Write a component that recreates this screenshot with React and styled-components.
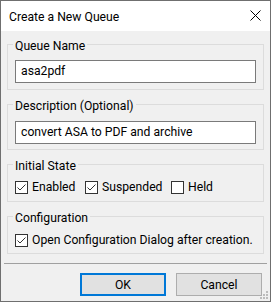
import React from "react";
import styled, { createGlobalStyle } from "styled-components";

const Global = createGlobalStyle`
  html, body { margin: 0; padding: 0; background: #ffffff; }
  * { box-sizing: border-box; }
  body { font-family: Roboto, "Segoe UI", sans-serif; }
`;

const Window = styled.div`
  position: relative;
  width: 271px;
  height: 302px;
  border: 1px solid #6f6f6f;
  background: #f0f0f0;
  display: flex;
  flex-direction: column;
  font-family: Roboto, sans-serif;
  font-size: 12.2px;
  color: #000;
`;

const TitleBar = styled.div`
  height: 30px;
  background: #ffffff;
  display: flex;
  align-items: center;
  justify-content: space-between;
  padding: 0 9px 0 8px;
  flex-shrink: 0;
`;

const Title = styled.span`
  font-size: 12.2px;
  line-height: 16px;
  padding-top: 1px;
`;

const CloseIcon = styled.svg`
  display: block;
  width: 11px;
  height: 11px;
  align-self: flex-start;
  margin-top: 9px;
`;

const Body = styled.div`
  flex: 1;
  display: flex;
  flex-direction: column;
  padding: 3px 6px 0 6px;
`;

const Group = styled.fieldset`
  margin: 0 0 4px 0;
  border: 1px solid #dcdcdc;
  padding: ${(p) => p.$pad || "6px 7px 6px 7px"};
  min-width: 0;
  &:last-of-type {
    margin-bottom: 0;
  }
`;

const Legend = styled.legend`
  font-size: 12.2px;
  line-height: 16px;
  padding: 4px 2px 0 2px;
  margin-left: -2px;
`;

const TextBox = styled.div`
  height: 23px;
  border: 1px solid #7a7a7a;
  background: #ffffff;
  font-size: 12.2px;
  line-height: 20px;
  padding: 0 5px;
  white-space: nowrap;
  overflow: hidden;
`;

const CheckRow = styled.div`
  display: flex;
  align-items: center;
  height: 13px;
`;

const CheckLabel = styled.label`
  display: flex;
  align-items: center;
  gap: 4px;
  width: ${(p) => (p.$w ? `${p.$w}px` : "auto")};
  flex-shrink: 0;
  font-size: 12.2px;
  line-height: 13px;
  white-space: nowrap;
`;

const Box = styled.span`
  width: 13px;
  height: 13px;
  border: 1px solid #333333;
  background: #ffffff;
  display: flex;
  align-items: center;
  justify-content: center;
  flex-shrink: 0;
`;

const Separator = styled.div`
  height: 1px;
  background: #a0a0a0;
  margin: 9px -3px 0 -3px;
`;

const ButtonRow = styled.div`
  display: flex;
  justify-content: flex-end;
  gap: 10px;
  padding: 9px 2px 0 0;
`;

const Button = styled.button`
  width: 86px;
  height: 23px;
  margin: 0;
  padding: 0;
  font-family: Roboto, sans-serif;
  font-size: 12.2px;
  color: #000;
  background: #e1e1e1;
  border: ${(p) => (p.$primary ? "2px solid #0078d7" : "1px solid #adadad")};
`;

const Grip = styled.svg`
  position: absolute;
  right: 1px;
  bottom: 1px;
  width: 10px;
  height: 10px;
`;

function Check({ checked, w, children }) {
  return (
    <CheckLabel $w={w}>
      <Box>
        {checked && (
          <svg width="11" height="11" viewBox="0 0 11 11">
            <polyline points="1.5,5.5 4,8 9.5,2.5" fill="none" stroke="#333" strokeWidth="1" />
          </svg>
        )}
      </Box>
      {children}
    </CheckLabel>
  );
}

export default function App() {
  return (
    <>
      <Global />
      <Window>
        <TitleBar>
          <Title>Create a New Queue</Title>
          <CloseIcon viewBox="0 0 11 11">
            <path d="M0.5 0.5 L10.5 10.5 M10.5 0.5 L0.5 10.5" stroke="#000" strokeWidth="1" />
          </CloseIcon>
        </TitleBar>
        <Body>
          <Group $pad="6px 7px 6px 7px">
            <Legend>Queue Name</Legend>
            <TextBox>asa2pdf</TextBox>
          </Group>
          <Group $pad="7px 7px 5px 7px">
            <Legend>Description (Optional)</Legend>
            <TextBox>convert ASA to PDF and archive</TextBox>
          </Group>
          <Group $pad="7px 7px 7px 7px">
            <Legend>Initial State</Legend>
            <CheckRow>
              <Check checked w={70}>Enabled</Check>
              <Check checked w={86}>Suspended</Check>
              <Check>Held</Check>
            </CheckRow>
          </Group>
          <Group $pad="8px 7px 6px 7px">
            <Legend>Configuration</Legend>
            <CheckRow>
              <Check checked>Open Configuration Dialog after creation.</Check>
            </CheckRow>
          </Group>
          <Separator />
          <ButtonRow>
            <Button $primary>OK</Button>
            <Button>Cancel</Button>
          </ButtonRow>
        </Body>
        <Grip viewBox="0 0 10 10">
          <rect x="7" y="1" width="2" height="2" fill="#bcbcbc" />
          <rect x="4" y="4" width="2" height="2" fill="#bcbcbc" />
          <rect x="7" y="4" width="2" height="2" fill="#bcbcbc" />
          <rect x="1" y="7" width="2" height="2" fill="#bcbcbc" />
          <rect x="4" y="7" width="2" height="2" fill="#bcbcbc" />
          <rect x="7" y="7" width="2" height="2" fill="#bcbcbc" />
        </Grip>
      </Window>
    </>
  );
}
